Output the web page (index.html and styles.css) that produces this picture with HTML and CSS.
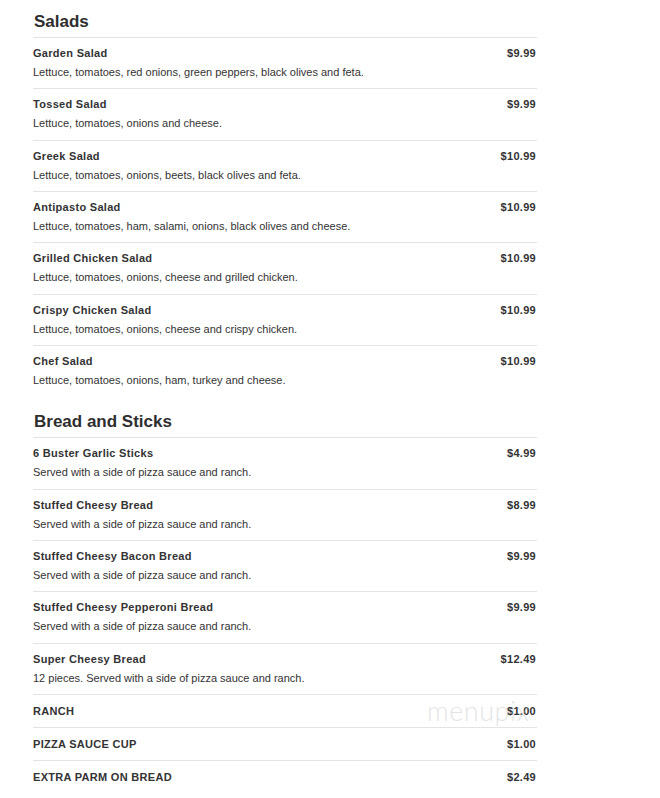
FILE: index.html
```html
<!DOCTYPE html>
<html>
<head>
<meta charset="utf-8">
<link rel="stylesheet" href="styles.css">
</head>
<body>
<div class="menu">
  <section class="section">
    <h2 class="section-title">Salads</h2>
    <div class="item"><div class="item-text"><div class="name">Garden Salad</div><div class="desc">Lettuce, tomatoes, red onions, green peppers, black olives and feta.</div></div><div class="price">$9.99</div></div>
    <div class="item"><div class="item-text"><div class="name">Tossed Salad</div><div class="desc">Lettuce, tomatoes, onions and cheese.</div></div><div class="price">$9.99</div></div>
    <div class="item"><div class="item-text"><div class="name">Greek Salad</div><div class="desc">Lettuce, tomatoes, onions, beets, black olives and feta.</div></div><div class="price">$10.99</div></div>
    <div class="item"><div class="item-text"><div class="name">Antipasto Salad</div><div class="desc">Lettuce, tomatoes, ham, salami, onions, black olives and cheese.</div></div><div class="price">$10.99</div></div>
    <div class="item"><div class="item-text"><div class="name">Grilled Chicken Salad</div><div class="desc">Lettuce, tomatoes, onions, cheese and grilled chicken.</div></div><div class="price">$10.99</div></div>
    <div class="item"><div class="item-text"><div class="name">Crispy Chicken Salad</div><div class="desc">Lettuce, tomatoes, onions, cheese and crispy chicken.</div></div><div class="price">$10.99</div></div>
    <div class="item"><div class="item-text"><div class="name">Chef Salad</div><div class="desc">Lettuce, tomatoes, onions, ham, turkey and cheese.</div></div><div class="price">$10.99</div></div>
  </section>
  <section class="section section-next">
    <h2 class="section-title">Bread and Sticks</h2>
    <div class="item"><div class="item-text"><div class="name">6 Buster Garlic Sticks</div><div class="desc">Served with a side of pizza sauce and ranch.</div></div><div class="price">$4.99</div></div>
    <div class="item"><div class="item-text"><div class="name">Stuffed Cheesy Bread</div><div class="desc">Served with a side of pizza sauce and ranch.</div></div><div class="price">$8.99</div></div>
    <div class="item"><div class="item-text"><div class="name">Stuffed Cheesy Bacon Bread</div><div class="desc">Served with a side of pizza sauce and ranch.</div></div><div class="price">$9.99</div></div>
    <div class="item"><div class="item-text"><div class="name">Stuffed Cheesy Pepperoni Bread</div><div class="desc">Served with a side of pizza sauce and ranch.</div></div><div class="price">$9.99</div></div>
    <div class="item"><div class="item-text"><div class="name">Super Cheesy Bread</div><div class="desc">12 pieces. Served with a side of pizza sauce and ranch.</div></div><div class="price">$12.49</div></div>
    <div class="item item-short watermarked"><div class="item-text"><div class="name">RANCH</div></div><div class="price">$1.00</div><span class="watermark">menupix</span></div>
    <div class="item item-short"><div class="item-text"><div class="name">PIZZA SAUCE CUP</div></div><div class="price">$1.00</div></div>
    <div class="item item-short"><div class="item-text"><div class="name">EXTRA PARM ON BREAD</div></div><div class="price">$2.49</div></div>
  </section>
</div>
</body>
</html>
```
FILE: styles.css
```css
html, body {
  margin: 0;
  padding: 0;
  background: #ffffff;
}

body {
  font-family: "Liberation Sans", Arial, sans-serif;
  color: #333333;
}

.menu {
  width: 504px;
  margin-left: 33px;
}

.section-next {
  margin-top: 4px;
}

.section-title {
  margin: 0;
  padding: 12px 0 5px 1px;
  font-size: 17px;
  line-height: 20px;
  font-weight: bold;
  color: #2e2e2e;
}

.item {
  display: flex;
  justify-content: space-between;
  align-items: flex-start;
  border-top: 1px solid #e4e4e4;
  padding: 6px 1px 6.33px 0;
}

.name,
.price {
  font-size: 11px;
  line-height: 19px;
  font-weight: bold;
  letter-spacing: 0.3px;
  color: #333333;
}

.desc {
  font-size: 11px;
  line-height: 19px;
  color: #333333;
}

.item-short {
  padding-top: 7px;
  padding-bottom: 6px;
}

.watermarked {
  position: relative;
}

.watermark {
  position: absolute;
  left: 394px;
  top: 1px;
  font-family: "Lato", "Liberation Sans", sans-serif;
  font-weight: 300;
  font-size: 27px;
  line-height: 30px;
  letter-spacing: 0.5px;
  color: rgba(200, 200, 200, 0.5);
  pointer-events: none;
}
```
